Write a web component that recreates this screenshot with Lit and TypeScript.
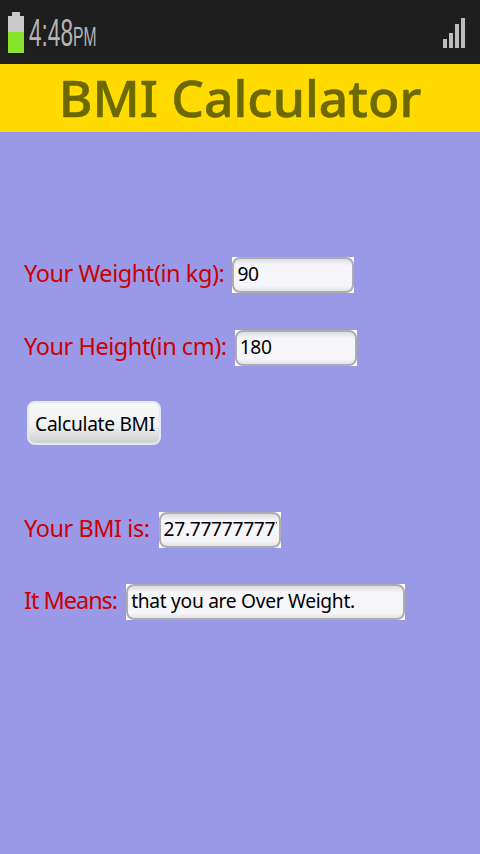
import { LitElement, html, css } from "lit";
import { customElement } from "lit/decorators.js";

@customElement("app-root")
export class AppRoot extends LitElement {
  static styles = css`
    :host { display: block; width: 480px; height: 854px; overflow: hidden; background: #9999e8; font-family: "Noto Sans", "Open Sans", sans-serif; }
    .status { height: 64px; background: #1e1e1e; display: flex; align-items: center; justify-content: space-between; padding: 0 15px 0 8px; box-sizing: border-box; }
    .left { display: flex; align-items: center; gap: 5px; }
    .battery { width: 16px; height: 41px; display: flex; flex-direction: column; align-items: center; }
    .cap { width: 8px; height: 4px; background: #c8c8c8; }
    .shell { width: 16px; flex: 1; background: #c9c9c9; display: flex; flex-direction: column; justify-content: flex-end; }
    .charge { height: 21px; background: #86e32c; }
    .time { font-family: "Liberation Sans", sans-serif; font-size: 39px; color: #b4b4b4; transform: scaleX(0.58); transform-origin: left center; line-height: 1; white-space: nowrap; width: 68px; }
    .time small { font-size: 27px; }
    .signal { display: flex; align-items: flex-end; gap: 2px; height: 30px; margin-top: 2px; }
    .signal i { display: block; width: 4px; background: #bdbdbd; }
    .bar1 { height: 9px; } .bar2 { height: 15px; } .bar3 { height: 24px; } .bar4 { height: 30px; }
    header { height: 68px; background: #ffdb00; color: #6b6900; font-size: 51.5px; font-weight: 500; -webkit-text-stroke: 0.6px #6b6900; text-align: center; line-height: 66px; }
    main { padding: 125px 0 0 24px; display: flex; flex-direction: column; }
    .row { display: flex; align-items: center; height: 36px; color: #cc0000; font-size: 23.5px; letter-spacing: -0.45px; white-space: nowrap; }
    .row label { display: block; margin-top: -5px; }
    .row label.tight { letter-spacing: -1.03px; }
    .field { margin-left: 8px; width: 122px; height: 36px; box-sizing: border-box; background: #fff; flex: none; letter-spacing: -0.3px; }
    .field.wide { width: 279px; }
    .field input { display: block; width: 100%; height: 100%; box-sizing: border-box; margin: 0; padding: 0 2px 3px 3px; border: 2px solid #adadad; border-radius: 8px; background: linear-gradient(#dcdce2, #f6f6fa 20%, #f6f6fa 85%, #e2e2e6); font: inherit; font-size: 19.2px; letter-spacing: inherit; color: #000; outline: none; }
    .r2 { margin-top: 37px; }
    .r2 .field { margin-left: 8px; }
    .btn { align-self: flex-start; margin: 35px 0 0 3px; width: 134px; height: 44px; box-sizing: border-box; border: 2px solid #e8e8f0; border-radius: 8px; background: linear-gradient(#f8f8f8, #f2f2f2 55%, #cfd0d2); color: #000; font: inherit; font-size: 19.2px; letter-spacing: -0.3px; padding: 0 0 0 2px; white-space: nowrap; }
    .r3 { margin-top: 67px; }
    .r3 .field { margin-left: 9px; }
    .r4 { margin-top: 36px; }
    .r4 .field { margin-left: 9px; }
  `;

  render() {
    return html`
      <div class="status">
        <div class="left">
          <div class="battery"><div class="cap"></div><div class="shell"><div class="charge"></div></div></div>
          <div class="time">4:48<small>PM</small></div>
        </div>
        <div class="signal"><i class="bar1"></i><i class="bar2"></i><i class="bar3"></i><i class="bar4"></i></div>
      </div>
      <header>BMI Calculator</header>
      <main>
        <div class="row"><label>Your Weight(in kg):</label><div class="field"><input .value=${"90"} /></div></div>
        <div class="row r2"><label>Your Height(in cm):</label><div class="field"><input .value=${"180"} /></div></div>
        <button class="btn">Calculate BMI</button>
        <div class="row r3"><label>Your BMI is:</label><div class="field"><input .value=${"27.7777777777"} /></div></div>
        <div class="row r4"><label class="tight">It Means:</label><div class="field wide"><input .value=${"that you are Over Weight."} /></div></div>
      </main>
    `;
  }
}
